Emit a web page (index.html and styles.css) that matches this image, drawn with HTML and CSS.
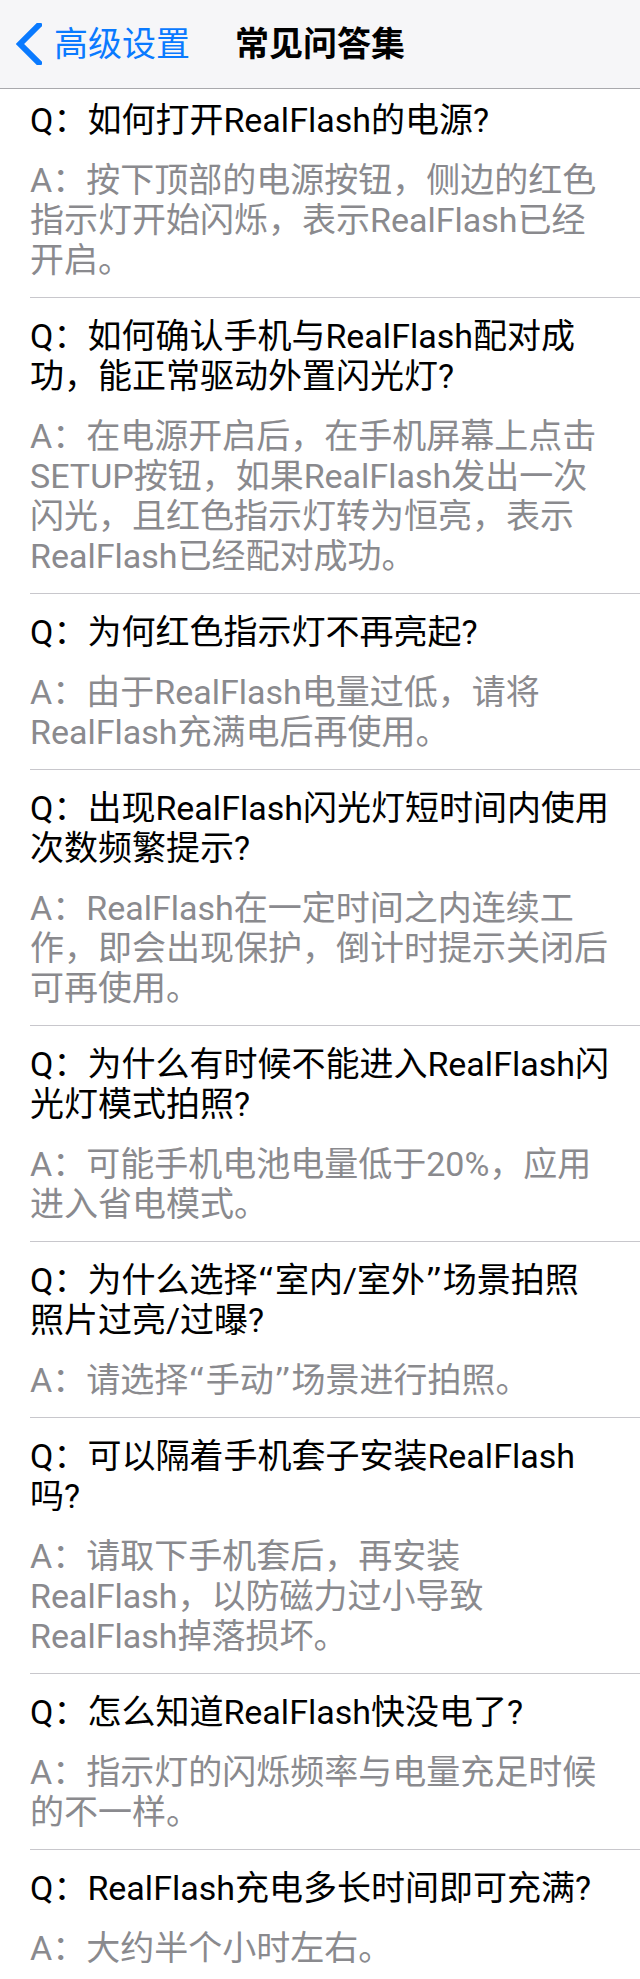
FILE: index.html
```html
<!DOCTYPE html>
<html lang="zh-CN">
<head>
    <meta charset="UTF-8">
    <title>常见问答集</title>
    <link rel="stylesheet" href="styles.css">
</head>
<body>
<div class="nav">
    <a href="javascript:;" class="back">
        <svg class="chevron" width="26" height="42" viewBox="0 0 26 42">
            <polyline points="23,2 4,21 23,40" fill="none" stroke="#0a7aff" stroke-width="6" stroke-linecap="square"/>
        </svg>
        <span>高级设置</span>
    </a>
    <h1 class="title">常见问答集</h1>
    <div></div>
</div>
<ul class="faq">
    <li>
        <p class="q">Q：如何打开RealFlash的电源?</p>
        <p class="a">A：按下顶部的电源按钮，侧边的红色指示灯开始闪烁，表示RealFlash已经开启。</p>
    </li>
    <li>
        <p class="q">Q：如何确认手机与RealFlash配对成功，能正常驱动外置闪光灯?</p>
        <p class="a">A：在电源开启后，在手机屏幕上点击SETUP按钮，如果RealFlash发出一次闪光，且红色指示灯转为恒亮，表示RealFlash已经配对成功。</p>
    </li>
    <li>
        <p class="q">Q：为何红色指示灯不再亮起?</p>
        <p class="a">A：由于RealFlash电量过低，请将RealFlash充满电后再使用。</p>
    </li>
    <li>
        <p class="q">Q：出现RealFlash闪光灯短时间内使用次数频繁提示?</p>
        <p class="a">A：RealFlash在一定时间之内连续工作，即会出现保护，倒计时提示关闭后可再使用。</p>
    </li>
    <li>
        <p class="q">Q：为什么有时候不能进入RealFlash闪光灯模式拍照?</p>
        <p class="a">A：可能手机电池电量低于20%，应用进入省电模式。</p>
    </li>
    <li>
        <p class="q">Q：为什么选择<q>室内/室外</q>场景拍照照片过亮/过曝?</p>
        <p class="a">A：请选择<q>手动</q>场景进行拍照。</p>
    </li>
    <li>
        <p class="q">Q：可以隔着手机套子安装RealFlash吗?</p>
        <p class="a">A：请取下手机套后，再安装RealFlash，以防磁力过小导致RealFlash掉落损坏。</p>
    </li>
    <li>
        <p class="q">Q：怎么知道RealFlash快没电了?</p>
        <p class="a">A：指示灯的闪烁频率与电量充足时候的不一样。</p>
    </li>
    <li>
        <p class="q">Q：RealFlash充电多长时间即可充满?</p>
        <p class="a">A：大约半个小时左右。</p>
    </li>
</ul>
</body>
</html>
```

FILE: styles.css
```css
body, h1, p, ul, li {
    margin: 0;
    padding: 0;
}

body {
    font: 34px/40px Roboto, "Noto Sans CJK SC", sans-serif;
    color: #000;
    background: #fff;
}

ul {
    list-style: none;
}

a {
    text-decoration: none;
}

/* 顶部导航栏 */
.nav {
    height: 88px;
    display: grid;
    grid-template-columns: 1fr auto 1fr;
    align-items: center;
    background: #f6f6f8;
    border-bottom: 1px solid #a9a9ad;
}

.back {
    display: flex;
    align-items: center;
    gap: 12px;
    padding-left: 16px;
    color: #0a7aff;
}

.chevron {
    display: block;
}

.title {
    font-size: 34px;
    font-weight: 600;
}

/* 问答列表 */
.faq li {
    margin-left: 30px;
    padding: 18px 30px 17px 0;
    border-bottom: 1px solid #c8c7cc;
}

.faq li:first-child {
    padding-top: 11px;
}

.faq li:last-child {
    border-bottom: 0;
}

.q {
    margin-bottom: 20px;
}

.a {
    color: #8a8a8e;
}

/* 引号稍宽一些 */
q {
    quotes: "“" "”";
}

q::before,
q::after {
    font-family: "DejaVu Sans", sans-serif;
}
```
